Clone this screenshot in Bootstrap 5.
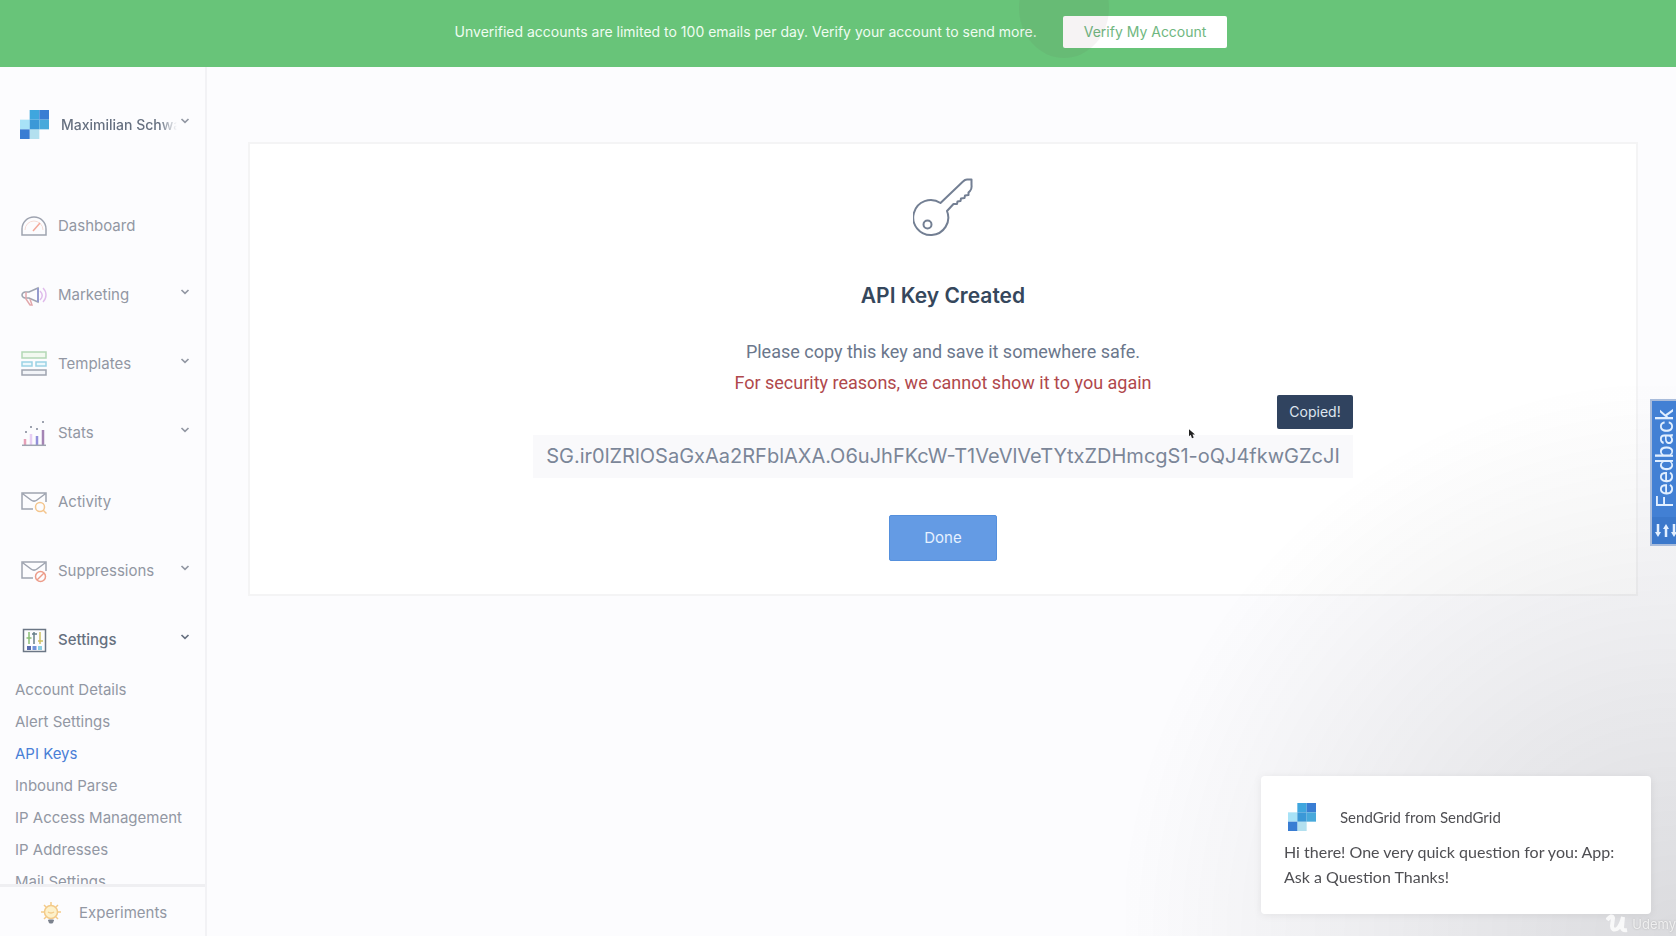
<!DOCTYPE html>
<html lang="en">
<head>
<meta charset="utf-8">
<meta name="viewport" content="width=device-width, initial-scale=1">
<title>API Keys</title>
<link href="https://cdn.jsdelivr.net/npm/bootstrap@5.3.0/dist/css/bootstrap.min.css" rel="stylesheet">
<style>
  body { font-family: Inter, "Liberation Sans", sans-serif; font-size: 14px; line-height: 24px; color: #6b778c; background: #fcfcfe; }
  .notice { background: #68c479; color: #effcf1; height: 67px; padding: 0 16px 3px 22px; gap: 26px; }
  .notice .btn { --bs-btn-bg: #fff; --bs-btn-color: #6fb780; --bs-btn-hover-bg: #f4fff6; --bs-btn-hover-color: #4fa663; --bs-btn-border-radius: 2px; --bs-btn-padding-y: 4px; --bs-btn-padding-x: 21px; --bs-btn-border-width: 0; --bs-btn-font-size: 14px; --bs-btn-line-height: 24px; }
  .ripple { width: 90px; height: 100px; left: -44px; bottom: -10px; border-radius: 50%; background: rgba(110,50,60,.06); pointer-events: none; }
  .side { width: 207px; border-right: 2px solid #f2f2f5; font-size: 15px; }
  .side a, .side button { color: #9297a3; text-decoration: none; }
  .side-scroll { overflow: hidden; min-height: 0; }
  .account { height: 114px; padding: 0 15px 0 20px; }
  .side .account-name { color: #667080; font-size: 14px; font-weight: 500; width: 116px; white-space: nowrap; -webkit-mask-image: linear-gradient(90deg, #000 85%, transparent); mask-image: linear-gradient(90deg, #000 85%, transparent); }
  .side-list { padding-top: 10px; }
  .side-item { height: 69px; padding: 0 15px 0 20px; gap: 10px; }
  .side-item > svg:first-child { width: 28px; height: 28px; opacity: .65; }
  .side-item.current { color: #667080; font-weight: 500; }
  .side-item.current > svg:first-child { opacity: .9; }
  .side-sub a { display: block; padding: 4px 0 4px 15px; white-space: nowrap; }
  .side-sub a.current { color: #4a7fd6; }
  .chev { width: 10px; height: 6px; margin-bottom: 6px; }
  .side-foot { height: 52px; padding: 3px 0 0 40px; gap: 17px; border-top: 3px solid #efeff2; }
  .panel { border: 2px solid #f4f4f5; background: #fff; margin: 75px 38px 0 41px; padding: 34px 16px 33px; }
  .panel h1 { font-size: 21px; line-height: 28px; font-weight: 600; color: #35475c; margin: 44px 0 26px; }
  .panel p { font-family: Roboto, sans-serif; font-size: 18px; line-height: 31px; }
  .panel .warn { color: #b0484c; }
  .key-box { background: #f9f9fb; width: 820px; max-width: 100%; font-size: 20px; line-height: 43px; white-space: nowrap; color: #7b8698; margin-top: 37px; }
  .copied { background: #30435f; color: #dfe6ef; font-size: 14px; line-height: 34px; width: 76px; border-radius: 2px; right: 0; bottom: 49px; }
  .pointer { right: 158px; bottom: 39px; width: 6px; height: 10px; }
  .btn-done { --bs-btn-bg: #649be4; --bs-btn-color: #e6f1ff; --bs-btn-border-color: #5590dd; --bs-btn-hover-bg: #5089d6; --bs-btn-hover-color: #fff; --bs-btn-border-radius: 2px; --bs-btn-padding-y: 10px; --bs-btn-padding-x: 34px; --bs-btn-font-size: 15px; --bs-btn-line-height: 24px; margin-top: 37px; }
  .shade { width: 550px; height: 550px; pointer-events: none; background: radial-gradient(ellipse at bottom right, rgba(29,31,40,.15) 0, rgba(29,31,40,0) 72%); }
  .feedback { right: 0; top: 399px; width: 26px; height: 147px; background: #4280d4; border: 2px solid #a9bcdb; border-right: 0; color: #e2efff; font-family: Roboto, sans-serif; font-size: 23px; }
  .feedback span { writing-mode: vertical-rl; transform: rotate(180deg); height: 116px; width: 20px; line-height: 20px; text-align: center; }
  .feedback svg { width: 24px; height: 27px; background: #3b78cb; }
  .chat { right: 25px; bottom: 22px; width: 390px; background: #fff; border-radius: 4px; padding: 27px 23px 25px; box-shadow: 0 1px 8px rgba(0,0,0,.07); color: #4f4f53; font-family: Lato, sans-serif; font-size: 16px; line-height: 25px; }
  .chat-from { font-size: 15px; }
  .watermark { right: 0; bottom: 0; color: rgba(255,255,255,.75); font-size: 13px; text-shadow: 0 0 2px #aaa; gap: 4px; }
</style>
</head>
<body>
<svg class="d-none" aria-hidden="true">
  <symbol id="logo" viewBox="0 0 6 6">
    <path fill="#a8e2f7" d="M0 2h2v2H0z"/><path fill="#b3e0ef" d="M2 4h2v2H2z"/>
    <path fill="#397dd3" d="M0 4h2v2H0z"/><path fill="#3fa6de" d="M2 0h2v2H2z"/>
    <path fill="#397dd3" d="M4 0h2v2H4z"/><path fill="#3b98d7" d="M2 2h2v2H2z"/><path fill="#48a9db" d="M4 2h2v2H4z"/>
  </symbol>
  <symbol id="chevron" viewBox="0 0 10 6"><path d="M1.500 1L5 4.300 8.500 1" fill="none" stroke="currentColor" stroke-width="1.700"/></symbol>
</svg>

<div class="vh-100 d-flex flex-column overflow-hidden">
  <header class="notice d-flex justify-content-center align-items-center flex-shrink-0 overflow-hidden">
    <span>Unverified accounts are limited to 100 emails per day. Verify your account to send more.</span>
    <div class="position-relative">
      <button type="button" class="btn">Verify My Account</button>
      <div class="ripple position-absolute"></div>
    </div>
  </header>

  <div class="d-flex flex-grow-1 overflow-hidden">
    <nav class="side d-flex flex-column flex-shrink-0" aria-label="Main">
      <div class="side-scroll flex-grow-1">
        <button type="button" class="account btn w-100 border-0 rounded-0 d-flex align-items-center text-start">
          <svg width="29" height="29" class="flex-shrink-0 me-2" aria-hidden="true"><use href="#logo"/></svg>
          <span class="account-name ms-1">Maximilian Schwa</span>
          <svg class="chev ms-auto flex-shrink-0"><use href="#chevron"/></svg>
        </button>
        <div class="side-list">
        <a href="#" class="side-item d-flex align-items-center">
          <svg viewBox="0 0 28 28" fill="none" stroke="#6d7587" stroke-width="1.500"><path d="M2 23V17a12 12 0 0 1 24 0v6z"/><path d="M5 18a9 9 0 0 1 18 0" stroke="#f2c9bd" stroke-width="1"/><path d="M13 19l7-8" stroke="#ee7c65"/></svg>
          <span>Dashboard</span>
        </a>
        <a href="#" class="side-item d-flex align-items-center">
          <svg viewBox="0 0 28 28" fill="none" stroke="#6d7587" stroke-width="1.500"><path d="M5 11h4l9-4v14l-9-4H5c-4-1-4-5 0-6z"/><path d="M6 11v7l4 6h2l-2-6" stroke="#d57b80"/><path d="M18 7v14" stroke="#5f68b5" stroke-width="2"/><path d="M20 10c3 3 3 6 0 9M23 7c4 4 4 10 0 14" stroke="#d29be2"/></svg>
          <span>Marketing</span><svg class="chev ms-auto"><use href="#chevron"/></svg>
        </a>
        <a href="#" class="side-item d-flex align-items-center">
          <svg viewBox="0 0 28 28" fill="none" stroke-width="1.500"><rect x="2" y="2" width="24" height="6" stroke="#8cc58f" fill="#eef8ea"/><rect x="2" y="12" width="10" height="4" stroke="#68bdd8" fill="#e5f7fc"/><rect x="16" y="12" width="10" height="4" stroke="#68bdd8" fill="#e5f7fc"/><rect x="2" y="20" width="24" height="5" stroke="#6d7587" fill="#eef0f5"/></svg>
          <span>Templates</span><svg class="chev ms-auto"><use href="#chevron"/></svg>
        </a>
        <a href="#" class="side-item d-flex align-items-center">
          <svg viewBox="0 0 28 28" fill="none" stroke-width="2.500"><path d="M5 26v-6" stroke="#dd6f93"/><path d="M11 26V15" stroke="#dcb6ee"/><path d="M17 26v-9" stroke="#5a55c8"/><path d="M23 26V11" stroke="#76458d"/><path d="M2 26.300h24" stroke="#6d7587" stroke-width="1.500"/><path d="M5 13h2M10 8h2M16 10h2M22 3h2" stroke="#6d7587" stroke-width="2"/></svg>
          <span>Stats</span><svg class="chev ms-auto"><use href="#chevron"/></svg>
        </a>
        <a href="#" class="side-item d-flex align-items-center">
          <svg viewBox="0 0 28 28" fill="none" stroke="#6d7587" stroke-width="1.500"><path d="M13 21H2V5h24v9M3 6l8 6c2 1.500 4 1.500 6 0l8-6"/><circle cx="20" cy="19" r="4.500" stroke="#f0a952"/><path d="M23 22l3.500 3.500" stroke="#f0a952"/></svg>
          <span>Activity</span>
        </a>
        <a href="#" class="side-item d-flex align-items-center">
          <svg viewBox="0 0 28 28" fill="none" stroke="#6d7587" stroke-width="1.500"><path d="M13 21H2V5h24v9M3 6l8 6c2 1.500 4 1.500 6 0l8-6"/><circle cx="20.500" cy="19.500" r="5" stroke="#e4694c"/><path d="M17 23l7-7" stroke="#e4694c"/></svg>
          <span>Suppressions</span><svg class="chev ms-auto"><use href="#chevron"/></svg>
        </a>
        <a href="#" class="side-item current d-flex align-items-center">
          <svg viewBox="0 0 28 28" fill="none" stroke="#5c6878" stroke-width="1.500"><rect x="3.500" y="3.500" width="22" height="22"/><path d="M9 6v12M6.500 12h5" stroke="#7db665"/><path d="M14 6v12M12 8h5" stroke="#57727c"/><path d="M20 6v12M18 15h5" stroke="#c8b950"/><path d="M7 22h4" stroke="#475ba5" stroke-width="4"/><path d="M12.500 22h4" stroke="#6287d5" stroke-width="4"/><path d="M18 22h4" stroke="#7fc9e1" stroke-width="4"/></svg>
          <span>Settings</span><svg class="chev ms-auto"><use href="#chevron"/></svg>
        </a>
        </div>
        <div class="side-sub">
          <a href="#">Account Details</a>
          <a href="#">Alert Settings</a>
          <a href="#" class="current">API Keys</a>
          <a href="#">Inbound Parse</a>
          <a href="#">IP Access Management</a>
          <a href="#">IP Addresses</a>
          <a href="#">Mail Settings</a>
        </div>
      </div>
      <a href="#" class="side-foot d-flex align-items-center flex-shrink-0">
        <svg width="22" height="24" viewBox="0 0 22 24" fill="none" stroke="#f3ca89" stroke-width="1.500"><circle cx="11" cy="11" r="6.500" fill="#fdf1cb"/><path d="M8 11q3 2 6 0M11 1v3M1 11h3M18 11h3M4 4l2 2M18 4l-2 2M4 18l2-2M18 18l-2-2"/><path d="M8.500 19h5l-1 3h-3z" fill="#7b818d" stroke="#7b818d" stroke-width="1"/></svg>
        <span>Experiments</span>
      </a>
    </nav>

    <main class="flex-grow-1">
      <section class="panel text-center">
        <svg width="60" height="60" viewBox="0 0 60 60" fill="none" stroke="#737f93" stroke-width="2" stroke-linejoin="round" aria-hidden="true">
          <path d="M27.500 25L50 3.500Q52 1.500 54 1.500H58.500V7Q59 11 57 13L55.500 14.500V17L52 17.500 51.500 20 48 20.500 47.500 23 44.500 23.500 44 26 40.500 26 34 33A17.500 17.500 0 1 1 27.500 25z"/>
          <circle cx="14.500" cy="46.500" r="4"/>
        </svg>
        <h1>API Key Created</h1>
        <p class="mb-0">Please copy this key and save it somewhere safe.</p>
        <p class="warn mb-0">For security reasons, we cannot show it to you again</p>
        <div class="key-box position-relative mx-auto">
          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
          <span class="copied position-absolute" role="status">Copied!</span>
          <svg class="pointer position-absolute" viewBox="0 0 7 11" aria-hidden="true"><path d="M0 0v8l2-1.500 1.500 4 2-.800L4 6h3z" fill="#222"/></svg>
        </div>
        <button type="button" class="btn btn-done">Done</button>
      </section>
    </main>
  </div>
</div>

<div class="shade position-fixed bottom-0 end-0"></div>

<button type="button" class="feedback position-fixed p-0 d-flex flex-column">
  <span class="ms-1">Feedback</span>
  <svg viewBox="0 0 24 27" fill="none" stroke="#e2efff" stroke-width="2.500"><path d="M6 7v10M14 20V10M22 7v10"/><path d="M3 15h6l-3 5zM11 12h6l-3-5zM19 15h6l-3 5z" fill="#e2efff" stroke="none"/></svg>
</button>

<aside class="chat position-fixed">
  <div class="d-flex align-items-center mb-2">
    <svg width="28" height="28" class="ms-1" aria-hidden="true"><use href="#logo"/></svg>
    <span class="chat-from ms-4">SendGrid from SendGrid</span>
  </div>
  <div>Hi there! One very quick question for you: App: Ask a Question Thanks!</div>
</aside>

<div class="watermark position-fixed d-flex align-items-center">
  <svg width="22" height="20" viewBox="0 0 22 20" fill="none" stroke="#fff" stroke-opacity=".8" stroke-width="4" aria-hidden="true"><path d="M1 6q5-6 6-2l-1 8q0 5 5 3 4-3 6-12l-1 10q0 4 5 3"/></svg>
  <span>Udemy</span>
</div>
<script src="https://cdn.jsdelivr.net/npm/bootstrap@5.3.0/dist/js/bootstrap.bundle.min.js"></script>
</body>
</html>
